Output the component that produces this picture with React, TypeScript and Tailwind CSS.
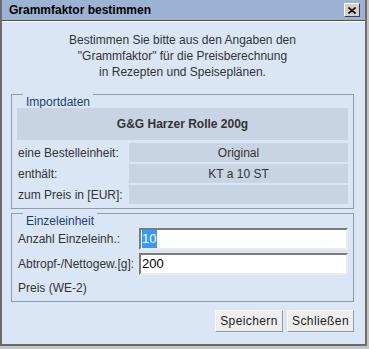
import React from "react";

const font = { fontFamily: '"Liberation Sans", Arial, sans-serif' };

const Row = ({ label, value }: { label: string; value: string }) => (
    <div className="flex h-[19px] items-center gap-[2px]">
        <div className="w-[110px] pl-[1px] text-[12px] text-[#333]">{label}</div>
        <div className="flex h-full flex-1 items-center justify-center bg-[#c8d4e4] text-[12px] text-[#333]">{value}</div>
    </div>
);

const Group = ({ title, children }: { title: string; children: React.ReactNode }) => (
    <fieldset className="w-[343px] border border-[#8d9cb3] px-[5px]">
        <legend className="ml-[6px] h-0 px-[3px] text-[12px] leading-[14px] text-[#1c3c78]">{title}</legend>
        {children}
    </fieldset>
);

export default function App() {
    return (
        <div className="h-[349px] w-[369px] bg-[#c4c4c4]" style={font}>
            <div className="flex h-[346px] w-[367px] flex-col border-x-2 border-b-2 border-[#6b6b6b]">
                <div className="flex h-[21px] items-center justify-between border-b border-[#4f4f4f] bg-[#9cb3d3] pl-[7px] pr-[5px]">
                    <span className="text-[12px] font-bold text-black">Grammfaktor bestimmen</span>
                    <button className="flex h-[14px] w-[16px] items-center justify-center border border-t-white border-l-white border-b-[#404040] border-r-[#404040] bg-[#d4d0c8]">
                        <svg width="8" height="7" viewBox="0 0 8 7">
                            <path d="M0.5 0.5 L7.5 6.5 M7.5 0.5 L0.5 6.5" stroke="black" strokeWidth="1.6" />
                        </svg>
                    </button>
                </div>
                <div className="flex flex-1 flex-col border-t border-white bg-[#dae6f6] pl-[9px]">
                    <p className="pt-[10px] pr-[11px] text-center text-[12px] leading-4 text-[#333]">
                        Bestimmen Sie bitte aus den Angaben den
                        <br />
                        "Grammfaktor" für die Preisberechnung
                        <br />
                        in Rezepten und Speiseplänen.
                    </p>
                    <div className="mt-[14px]">
                        <Group title="Importdaten">
                            <div className="flex flex-col gap-[2px] pt-[13px] pb-[4px]">
                                <div className="mb-[1px] flex h-[32px] items-center justify-center bg-[#c8d4e4] text-[12px] font-bold text-[#333]">
                                    G&amp;G Harzer Rolle 200g
                                </div>
                                <Row label="eine Bestelleinheit:" value="Original" />
                                <Row label="enthält:" value="KT a 10 ST" />
                                <Row label="zum Preis in [EUR]:" value="" />
                            </div>
                        </Group>
                    </div>
                    <div className="mt-[4px]">
                        <Group title="Einzeleinheit">
                            <div className="flex flex-col gap-[3px] pt-[14px] pb-[3px]">
                                <div className="flex h-[22px] items-center">
                                    <span className="w-[122px] pl-[1px] text-[12px] text-[#333]">Anzahl Einzeleinh.:</span>
                                    <div className="flex h-full flex-1 items-center border-2 border-t-[#7b7b7b] border-l-[#7b7b7b] border-b-[#ececec] border-r-[#ececec] bg-white pl-[1px]">
                                        <span className="flex h-[18px] items-center bg-[#3399ff] pr-[1px] text-[13px] text-white">10</span>
                                    </div>
                                </div>
                                <div className="flex h-[22px] items-center">
                                    <span className="w-[122px] pl-[1px] text-[12px] text-[#333]">Abtropf-/Nettogew.[g]:</span>
                                    <div className="flex h-full flex-1 items-center border-2 border-t-[#7b7b7b] border-l-[#7b7b7b] border-b-[#ececec] border-r-[#ececec] bg-white pl-[1px] text-[13px] text-black">
                                        200
                                    </div>
                                </div>
                                <div className="flex h-[20px] items-center pl-[1px] text-[12px] text-[#333]">Preis (WE-2)</div>
                            </div>
                        </Group>
                    </div>
                    <div className="mt-[8px] flex w-[343px] justify-end gap-[4px]">
                        <button className="h-[22px] w-[68px] border border-t-[#f8f8f8] border-l-[#f8f8f8] border-b-[#9a9a9a] border-r-[#9a9a9a] bg-[#eeeeee] text-[12px] tracking-[0.4px] text-[#222]">
                            Speichern
                        </button>
                        <button className="h-[22px] w-[67px] border border-t-[#f8f8f8] border-l-[#f8f8f8] border-b-[#9a9a9a] border-r-[#9a9a9a] bg-[#eeeeee] text-[12px] tracking-[0.4px] text-[#222]">
                            Schließen
                        </button>
                    </div>
                </div>
            </div>
        </div>
    );
}
